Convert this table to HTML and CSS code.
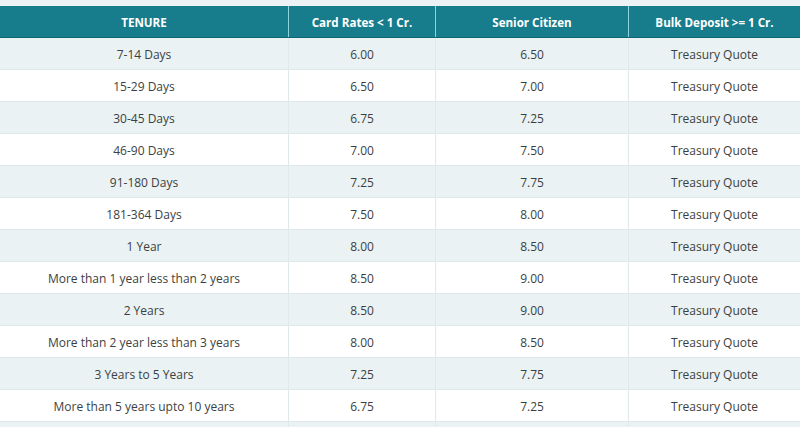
FILE: index.html
```html
<!DOCTYPE html>
<html>
<head>
<meta charset="utf-8">
<link rel="stylesheet" href="styles.css">
</head>
<body>
<div class="wrap">
<table class="rates">
<thead>
<tr><th class="c1">TENURE</th><th class="c2">Card Rates &lt; 1 Cr.</th><th class="c3">Senior Citizen</th><th class="c4">Bulk Deposit &gt;= 1 Cr.</th></tr>
</thead>
<tbody>
<tr><td>7-14 Days</td><td>6.00</td><td>6.50</td><td>Treasury Quote</td></tr>
<tr><td>15-29 Days</td><td>6.50</td><td>7.00</td><td>Treasury Quote</td></tr>
<tr><td>30-45 Days</td><td>6.75</td><td>7.25</td><td>Treasury Quote</td></tr>
<tr><td>46-90 Days</td><td>7.00</td><td>7.50</td><td>Treasury Quote</td></tr>
<tr><td>91-180 Days</td><td>7.25</td><td>7.75</td><td>Treasury Quote</td></tr>
<tr><td>181-364 Days</td><td>7.50</td><td>8.00</td><td>Treasury Quote</td></tr>
<tr><td>1 Year</td><td>8.00</td><td>8.50</td><td>Treasury Quote</td></tr>
<tr><td>More than 1 year less than 2 years</td><td>8.50</td><td>9.00</td><td>Treasury Quote</td></tr>
<tr><td>2 Years</td><td>8.50</td><td>9.00</td><td>Treasury Quote</td></tr>
<tr><td>More than 2 year less than 3 years</td><td>8.00</td><td>8.50</td><td>Treasury Quote</td></tr>
<tr><td>3 Years to 5 Years</td><td>7.25</td><td>7.75</td><td>Treasury Quote</td></tr>
<tr><td>More than 5 years upto 10 years</td><td>6.75</td><td>7.25</td><td>Treasury Quote</td></tr>
<tr><td>&nbsp;</td><td>&nbsp;</td><td>&nbsp;</td><td>&nbsp;</td></tr>
</tbody>
</table>
</div>
</body>
</html>
```
FILE: styles.css
```css
html, body {
  margin: 0;
  padding: 0;
  background: #edf3f5;
  overflow: hidden;
}
.wrap {
  padding-top: 6px;
  width: 800px;
  height: 421px;
  overflow: hidden;
}
.rates {
  width: 800px;
  border-collapse: collapse;
  table-layout: fixed;
  font-family: "Open Sans", "Noto Sans", sans-serif;
  font-size: 12px;
  color: #3b3f42;
}
.rates th {
  background: #177d8c;
  color: #ffffff;
  font-weight: 700;
  font-size: 11.6px;
  height: 29px;
  padding: 2px 0 0;
  text-align: center;
  border-left: 1px solid #8cd3dc;
  border-bottom: 1px solid #0f6572;
}
.rates th:first-child { border-left: none; }
.c1 { width: 288px; }
.c2 { width: 146px; }
.c3 { width: 192px; }
.rates td {
  height: 29px;
  padding: 2px 0 0;
  text-align: center;
  border-left: 1px solid #dfe9ec;
  border-bottom: 1px solid #dfe9ec;
  background: #ffffff;
}
.rates td:first-child { border-left: none; }
.rates tbody tr:nth-child(odd) td { background: #eaf2f4; }
```
